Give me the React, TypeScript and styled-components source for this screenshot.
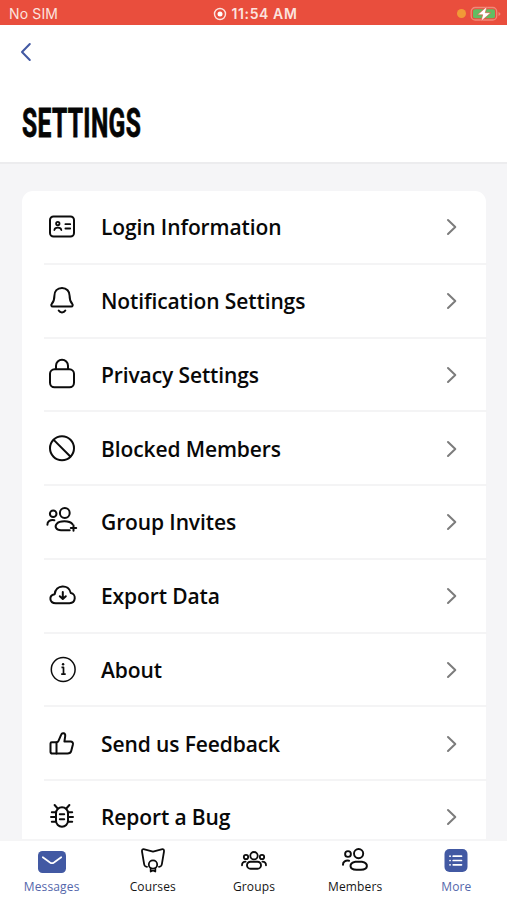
import React from 'react';
import styled, { createGlobalStyle } from 'styled-components';

const Global = createGlobalStyle`
  * { box-sizing: border-box; }
  body { margin: 0; background: #fff; }
`;

const Screen = styled.div`
  width: 507px;
  height: 900px;
  display: flex;
  flex-direction: column;
  overflow: hidden;
  background: #f5f5f7;
  color: #080808;
  font-family: 'Open Sans', sans-serif;
`;

const StatusBar = styled.div`
  flex: none;
  height: 25px;
  padding: 2px 6px 0 9px;
  display: grid;
  grid-template-columns: 1fr auto 1fr;
  align-items: center;
  background: #e94e3d;
  color: #fbe3df;
  font-family: Inter, sans-serif;
  font-size: 14px;
  line-height: 20px;
`;

const Carrier = styled.span`
  letter-spacing: 0.15px;
`;

const Clock = styled.div`
  display: flex;
  align-items: center;
  gap: 5px;
  font-weight: 600;
  letter-spacing: 0.6px;
`;

const Power = styled.div`
  display: flex;
  justify-content: flex-end;
  align-items: center;
  gap: 4px;
`;

const Dot = styled.span`
  width: 9px;
  height: 9px;
  border-radius: 50%;
  background: #f19a37;
`;

const Header = styled.header`
  flex: none;
  height: 139px;
  padding: 15px 19px 0;
  background: #fff;
  border-bottom: 2px solid #ececee;
`;

const BackButton = styled.button`
  display: block;
  width: 14px;
  height: 24px;
  padding: 0;
  border: 0;
  background: none;
`;

const Title = styled.h1`
  margin: 35px 0 0 2.5px;
  width: max-content;
  font-family: Roboto, sans-serif;
  font-size: 41px;
  line-height: 48px;
  font-weight: 700;
  letter-spacing: 0.6px;
  color: #050505;
  -webkit-text-stroke: 0.8px #050505;
  transform: scaleX(0.6);
  transform-origin: left center;
`;

const Content = styled.main`
  flex: 1;
  min-height: 0;
  overflow: hidden;
  padding: 27px 21px 0 22px;
`;

const Card = styled.div`
  background: #fff;
  border-radius: 11px;
`;

const Row = styled.div`
  height: 73.75px;
  padding-left: 20px;
  display: flex;
  flex-direction: column;
`;

const RowBody = styled.div`
  flex: 1;
  display: flex;
  align-items: center;
  padding: 1px 27.5px 0 0;
`;

const Divider = styled.div`
  height: 2px;
  margin: 0 -1px 0 2px;
  background: #f4f4f5;
`;

const Label = styled.span`
  flex: 1;
  padding-left: 19px;
  font-size: 21px;
  line-height: 30px;
  font-weight: 600;
  letter-spacing: -0.11px;
`;

const TabBar = styled.nav`
  flex: none;
  height: 61px;
  padding: 1px 0 0 1px;
  border-top: 2px solid #f5f5f6;
  display: grid;
  grid-template-columns: repeat(5, 1fr);
  background: #fff;
`;

const Tab = styled.div<{ $active?: boolean }>`
  display: flex;
  flex-direction: column;
  align-items: center;
  color: ${(p) => (p.$active ? '#5467ab' : '#151515')};
  font-size: 12px;
  line-height: 16px;
  font-weight: 500;
  letter-spacing: 0.15px;
`;

const Glyph = styled.svg`
  display: block;
  flex: none;
  fill: none;
  stroke: #0c0c0c;
  stroke-width: 2;
  stroke-linecap: round;
  stroke-linejoin: round;
`;

const rows: { label: string; icon: React.ReactNode }[] = [
  {
    label: 'Login Information',
    icon: (
      <>
        <rect x="8" y="9.5" width="24" height="20" rx="3.5" />
        <circle cx="15.8" cy="16.6" r="1.7" strokeWidth="1.8" />
        <path d="M12.4 23c.3-3.3 6.600-3.300 6.900 0M23.400 17.200h4.800M23.400 21.500h4.800" strokeWidth="1.800" />
      </>
    ),
  },
  {
    label: 'Notification Settings',
    icon: (
      <>
        <path d="M20 7c-4.800 0-7.600 3.300-7.600 7.800 0 5-1 6.300-2.600 8-1 1.200-.5 2.700 1 2.700h18.400c1.500 0 2-1.500 1-2.700-1.600-1.700-2.600-3-2.600-8C27.600 10.300 24.800 7 20 7Z" />
        <path d="M16.700 29.500c1.500 2.500 5.100 2.500 6.600 0" />
      </>
    ),
  },
  {
    label: 'Privacy Settings',
    icon: (
      <>
        <rect x="8" y="14.300" width="24" height="18" rx="4.500" />
        <path d="M14 14V10.800a6 6 0 0 1 12 0V14" />
      </>
    ),
  },
  {
    label: 'Blocked Members',
    icon: (
      <>
        <circle cx="20" cy="19.200" r="12" />
        <path d="m11.700 10.900 16.600 16.600" />
      </>
    ),
  },
  {
    label: 'Group Invites',
    icon: (
      <>
        <circle cx="11.200" cy="11.800" r="3.300" />
        <circle cx="22.800" cy="11" r="4.900" />
        <path d="M5.400 22.700c-.2-3.500 3-5.300 7-4.500" />
        <path d="M27.700 28.300H19c-5 0-6.600-3.800-4.300-6.500 2.800-3.300 12.800-3.500 15.800.4M31.500 23.300v5.400M28.800 26h5.400" />
      </>
    ),
  },
  {
    label: 'Export Data',
    icon: (
      <>
        <path d="M13.800 27.200c-6.600 0-7.400-7.800-1.100-9 .8-9.800 14.300-10.500 16.100-1.100 5.700.8 5.200 10.100-1.300 10.100Z" />
        <path d="M20.800 16v6.800M17.800 20.200l3 2.800 3-2.800" />
      </>
    ),
  },
  {
    label: 'About',
    icon: (
      <>
        <circle cx="21.200" cy="19.500" r="11.900" strokeWidth="1.500" />
        <path d="M19.500 17.400h2v6.600M19.200 24.200h4.500" strokeWidth="1.700" strokeLinecap="butt" />
        <circle cx="21.100" cy="14.300" r="1.200" fill="#0c0c0c" stroke="none" />
      </>
    ),
  },
  {
    label: 'Send us Feedback',
    icon: (
      <>
        <path d="M14.500 18.200H9.800c-.8 0-1.300.5-1.300 1.300v8.200c0 1.200.7 1.800 1.800 1.800h15.200c2.300 0 3.200-.6 3.700-2.500l1.700-6.500c.4-1.700-.6-2.900-2.300-2.900h-6.200l.8-5.500c.4-3-3-4-4-1.400l-2.700 6.100c-.3.800-.9 1.400-2 1.400Z" />
        <path d="M14.500 18.500v11" />
      </>
    ),
  },
  {
    label: 'Report a Bug',
    icon: (
      <>
        <rect x="14" y="10.300" width="12" height="19.400" rx="6" />
        <path d="M15.700 11.500 12.600 8M24.300 11.500 27.400 8M14 15.300H9.800M14 20H9M14 24.700H9.800M26 15.300h4.200M26 20h5M26 24.700h4.200M17.800 17.300h4.400M17.800 22.300h4.400" />
      </>
    ),
  },
];

const tabs: { label: string; active?: boolean; icon: React.ReactNode }[] = [
  {
    label: 'Messages',
    active: true,
    icon: (
      <>
        <rect x="6" y="9" width="28" height="22" rx="4.500" fill="#4259a3" stroke="none" />
        <path d="m10.800 15.200 7.200 5.300q2 1.400 4 0l7.200-5.300" stroke="#fff" strokeWidth="1.700" />
      </>
    ),
  },
  {
    label: 'Courses',
    icon: (
      <>
        <path d="M14 24.800c-2.500-.3-2.700-1.200-3-3.500L9 9.500c-.3-2 .7-2.600 2.500-2.100L20 9.600l8.500-2.200c1.800-.5 2.800.1 2.500 2.100l-2 11.800c-.3 2.300-.5 3.200-3 3.500" strokeWidth="1.800" />
        <circle cx="20" cy="22.500" r="4.200" strokeWidth="1.800" />
        <path d="M17.700 26.300v3.200l2.300-1 2.300 1v-3.200" strokeWidth="1.800" />
      </>
    ),
  },
  {
    label: 'Groups',
    icon: (
      <>
        <circle cx="20" cy="13.700" r="3.700" strokeWidth="1.800" />
        <circle cx="12" cy="15" r="2.200" strokeWidth="1.800" />
        <circle cx="28" cy="15" r="2.200" strokeWidth="1.800" />
        <rect x="13" y="19.700" width="14" height="7" rx="3.500" strokeWidth="1.900" />
        <path d="M8 23.300c0-2.300 1.200-3.600 3.600-3.600M32 23.300c0-2.300-1.200-3.600-3.600-3.600" strokeWidth="1.800" />
      </>
    ),
  },
  {
    label: 'Members',
    icon: (
      <>
        <circle cx="13" cy="12" r="2.900" strokeWidth="1.900" />
        <circle cx="23.600" cy="11.600" r="4.600" strokeWidth="1.900" />
        <path d="M8 22.700c-.2-3 2.600-4.600 6.100-4" />
        <path d="M20.500 19.700h6.400c6.800 1.200 6.800 8-1 8h-4.400c-7.800 0-7.800-6.800-1-8Z" />
      </>
    ),
  },
  {
    label: 'More',
    active: true,
    icon: (
      <>
        <rect x="8.500" y="7" width="23" height="23" rx="5" fill="#4259a3" stroke="none" />
        <path d="M17.200 14.200h8.300M17.200 18.500h8.300M17.200 22.800h8.300M14 14.200h.1M14 18.500h.1M14 22.800h.1" stroke="#fff" strokeWidth="1.700" />
      </>
    ),
  },
];

export default function App() {
  return (
    <Screen>
      <Global />
      <StatusBar>
        <Carrier>No SIM</Carrier>
        <Clock>
          <svg width="14" height="14" viewBox="0 0 14 14">
            <circle cx="7" cy="7" r="5.500" fill="none" stroke="#fbe3df" strokeWidth="1.400" />
            <circle cx="7" cy="7" r="2.500" fill="#fff" />
          </svg>
          11:54 AM
        </Clock>
        <Power>
          <Dot />
          <svg width="31" height="16" viewBox="0 0 31 16">
            <rect x="1.200" y="1.500" width="25.500" height="12.500" rx="4" fill="none" stroke="#f0897a" strokeWidth="1.300" />
            <rect x="3" y="3.300" width="22" height="9" rx="2" fill="#62bd62" />
            <path d="M28.500 6v4q2-.8 2-2t-2-2Z" fill="#f0897a" />
            <path d="M17 .5 7.500 8.800h5.200L11 15.300l9.800-8.600h-5.500Z" fill="#fff" stroke="#e94e3d" strokeWidth=".6" />
          </svg>
        </Power>
      </StatusBar>
      <Header>
        <BackButton aria-label="Back">
          <Glyph width="14" height="24" viewBox="0 0 14 24">
            <path d="M10.800 4 3 12l7.800 8" stroke="#4259a3" />
          </Glyph>
        </BackButton>
        <Title>SETTINGS</Title>
      </Header>
      <Content>
        <Card>
          {rows.map((row) => (
            <Row key={row.label}>
              <RowBody>
                <Glyph width="40" height="40" viewBox="0 0 40 40">{row.icon}</Glyph>
                <Label>{row.label}</Label>
                <Glyph width="14" height="22" viewBox="0 0 14 22">
                  <path d="m3 4 7.300 7L3 18" stroke="#7c7c7c" />
                </Glyph>
              </RowBody>
              <Divider />
            </Row>
          ))}
        </Card>
      </Content>
      <TabBar>
        {tabs.map((tab) => (
          <Tab key={tab.label} $active={tab.active}>
            <Glyph width="40" height="37" viewBox="0 0 40 37">{tab.icon}</Glyph>
            {tab.label}
          </Tab>
        ))}
      </TabBar>
    </Screen>
  );
}
